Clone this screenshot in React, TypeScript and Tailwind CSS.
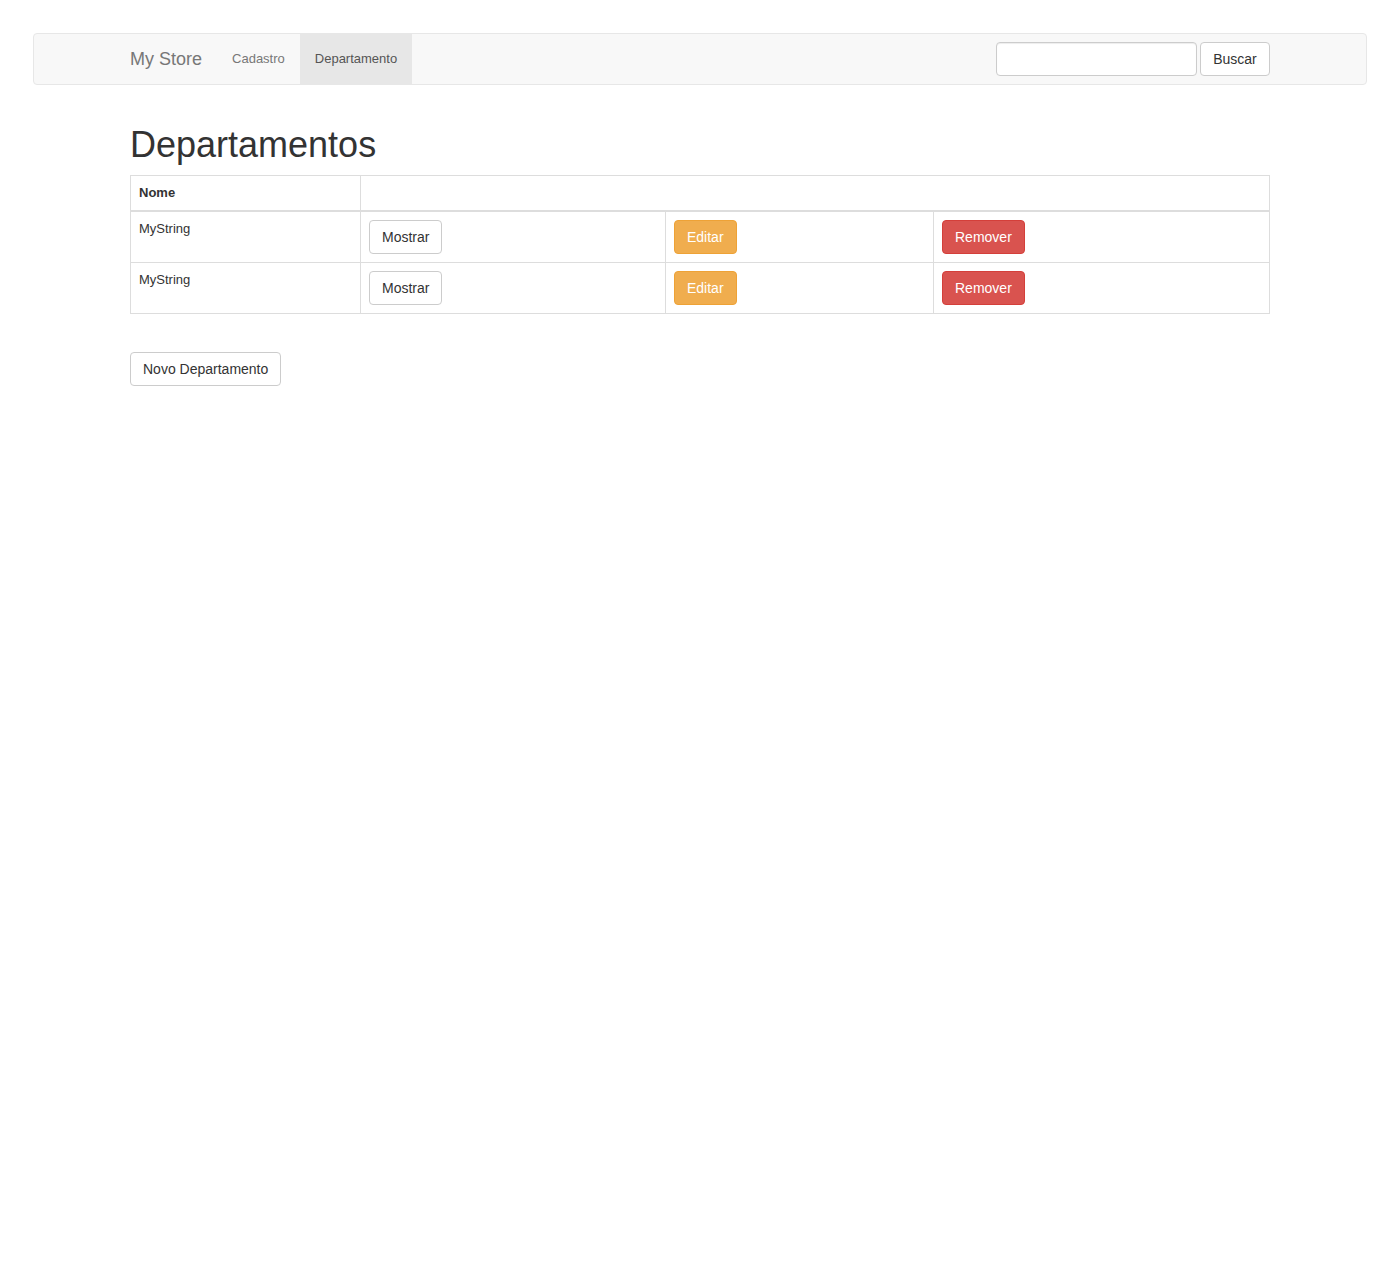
import React from "react";

const btnBase =
  "inline-block h-[34px] px-3 text-[14px] leading-[20px] rounded-[4px] border whitespace-nowrap";

function Row() {
  return (
    <tr>
      <td className="border border-[#ddd] p-2 align-top leading-[18.57px] text-[13px] text-[#333]">
        MyString
      </td>
      <td className="border border-[#ddd] p-2 align-top">
        <button className={`${btnBase} bg-white border-[#ccc] text-[#333]`}>Mostrar</button>
      </td>
      <td className="border border-[#ddd] p-2 align-top">
        <button className={`${btnBase} bg-[#f0ad4e] border-[#eea236] text-white`}>Editar</button>
      </td>
      <td className="border border-[#ddd] p-2 align-top">
        <button className={`${btnBase} bg-[#d9534f] border-[#d43f3a] text-white`}>Remover</button>
      </td>
    </tr>
  );
}

export default function App() {
  return (
    <div
      className="min-h-[1282px] bg-white text-[#333] text-[13px]"
      style={{ fontFamily: '"Liberation Sans", Arial, sans-serif' }}
    >
      <div className="pt-[33px] px-[33px]">
        <nav className="border border-[#e7e7e7] bg-[#f8f8f8] rounded-[4px] min-h-[50px]">
          <div className="w-[1170px] mx-auto px-[15px] flex items-start justify-between">
            <div className="flex">
              <a className="block h-[50px] py-[15px] text-[18px] leading-[20px] text-[#777] pr-[15px]">
                My Store
              </a>
              <a className="block h-[50px] px-[15px] py-[15px] text-[13px] leading-[20px] text-[#777]">
                Cadastro
              </a>
              <a className="block h-[50px] px-[15px] py-[15px] text-[13px] leading-[20px] text-[#555] bg-[#e7e7e7]">
                Departamento
              </a>
            </div>
            <div className="flex items-center gap-[3px] mt-[8px]">
              <input
                type="text"
                className="w-[201px] h-[34px] border border-[#ccc] rounded-[4px] bg-white px-3 text-[14px] shadow-[inset_0_1px_1px_rgba(0,0,0,0.075)] outline-none"
              />
              <button className={`${btnBase} bg-white border-[#ccc] text-[#333] w-[70px] px-0`}>
                Buscar
              </button>
            </div>
          </div>
        </nav>
      </div>

      <div className="w-[1140px] mx-auto pt-[20px]">
        <h1 className="text-[36px] leading-[39.6px] text-[#333] mt-[20px] mb-[10px] font-normal">
          Departamentos
        </h1>
        <table className="w-[1139px] table-fixed border-collapse border border-[#ddd] mb-[20px]">
          <colgroup>
            <col className="w-[230px]" />
            <col className="w-[305px]" />
            <col className="w-[268px]" />
            <col className="w-[336px]" />
          </colgroup>
          <thead>
            <tr>
              <th className="border border-[#ddd] border-b-2 p-2 text-left font-bold text-[13px] leading-[18.57px] align-bottom">
                Nome
              </th>
              <th colSpan={3} className="border border-[#ddd] border-b-2 p-2"></th>
            </tr>
          </thead>
          <tbody>
            <Row />
            <Row />
          </tbody>
        </table>
        <div className="h-[18px]" />
        <button className={`${btnBase} bg-white border-[#ccc] text-[#333]`}>Novo Departamento</button>
      </div>
    </div>
  );
}
